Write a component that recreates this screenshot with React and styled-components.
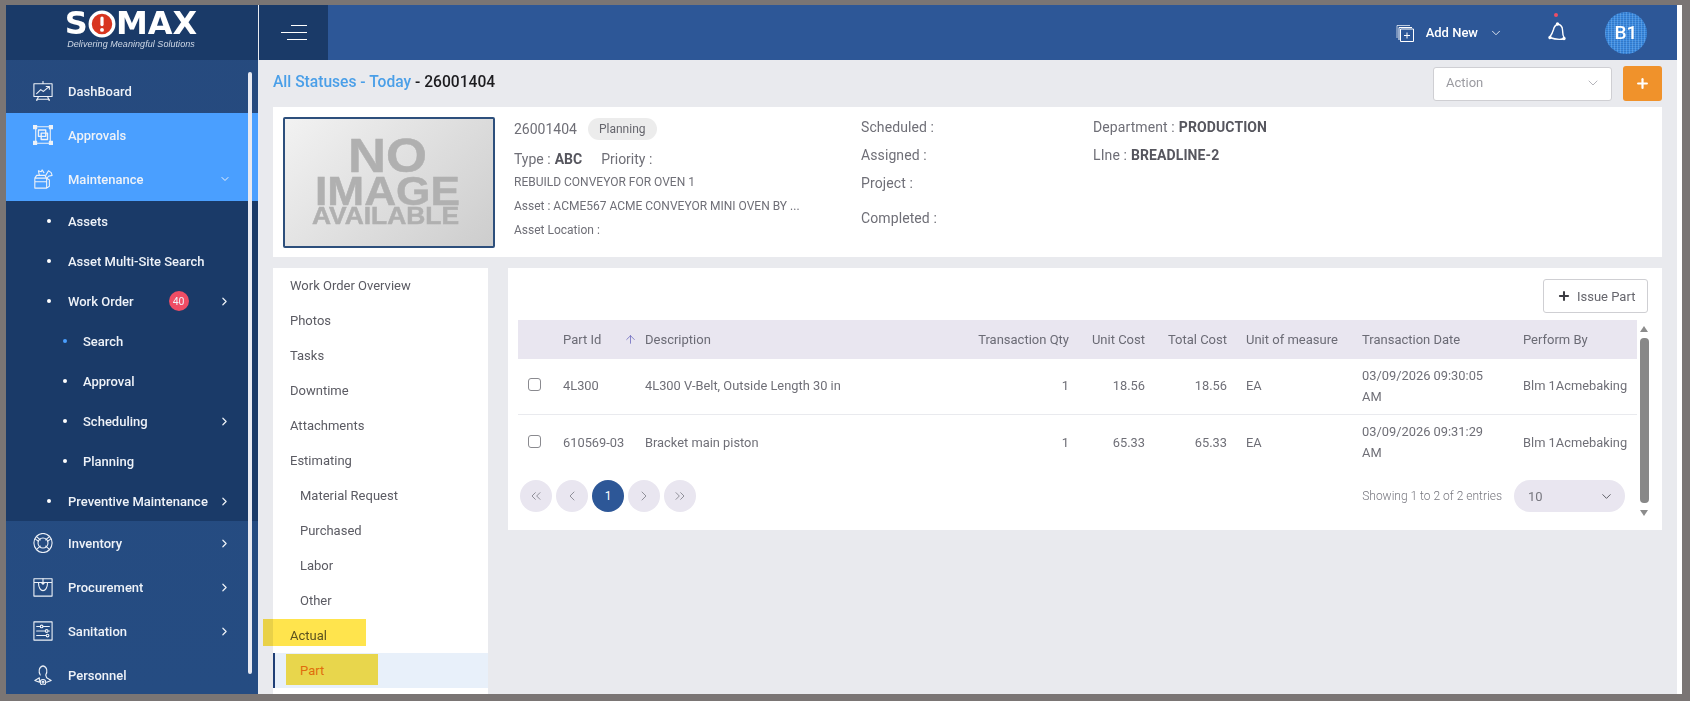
import styled, { createGlobalStyle } from "styled-components";
import { ChevronDown, ChevronRight, ChevronLeft, ChevronsLeft, ChevronsRight, Plus, ArrowUp } from "lucide-react";

const GlobalStyle = createGlobalStyle`
  html, body { margin: 0; padding: 0; background: #7a7574; }
  * { box-sizing: border-box; }
  body { font-family: Roboto, "Liberation Sans", sans-serif; }
`;

const Frame = styled.div`
  width: 1690px;
  height: 701px;
  padding: 5px 8px 7px 6px;
  background: #7a7574;
  overflow: hidden;
`;

const Shell = styled.div`
  display: flex;
  height: 689px;
  padding-right: 5px;
  background: #fff;
`;

const Sidebar = styled.aside`
  position: relative;
  flex: 0 0 253px;
  border-right: 1px solid #e8ebf2;
  background: linear-gradient(180deg, #264a7e 0%, #254c82 100%);
  color: #eef2f8;
  overflow: hidden;
`;

const Brand = styled.div`
  height: 55px;
  background: #1a3a68;
  display: flex;
  flex-direction: column;
  align-items: center;
  padding-top: 5px;
  padding-right: 2px;
`;

const Wordmark = styled.div`
  display: flex;
  align-items: center;
  height: 27px;
  color: #fff;
  font-family: "DejaVu Sans", sans-serif;
  font-weight: 700;
  font-size: 32px;
  line-height: 27px;
`;

const Tagline = styled.div`
  margin-top: 2px;
  font-family: "Liberation Sans", sans-serif;
  font-style: italic;
  font-size: 9px;
  letter-spacing: 0.05px;
  color: #cfd8e6;
`;

const Menu = styled.nav`
  padding-top: 9px;
`;

const MenuItem = styled.div`
  display: flex;
  align-items: center;
  height: 44px;
  padding: 0 27px;
  font-size: 13px;
  font-weight: 500;
  background: ${(p) => (p.$active ? "#4a9fff" : "transparent")};
  svg.icon { flex: 0 0 20px; margin-right: 15px; }
`;

const SubMenu = styled.div`
  background: #1a3a68;
`;

const SubItem = styled.div`
  display: flex;
  align-items: center;
  height: 40px;
  padding: 0 27px 0 ${(p) => (p.$nested ? 57 : 41)}px;
  font-size: 13px;
  font-weight: 500;
`;

const Bullet = styled.span`
  flex: 0 0 4px;
  height: 4px;
  margin-right: ${(p) => (p.$nested ? 16 : 17)}px;
  border-radius: 50%;
  background: ${(p) => (p.$current ? "#4a9fff" : "#fff")};
`;

const Caret = styled.span`
  display: flex;
  margin-left: auto;
`;

const CountBadge = styled.span`
  display: flex;
  align-items: center;
  justify-content: center;
  width: 20px;
  height: 20px;
  margin-left: 35px;
  border-radius: 50%;
  background: #ee4d65;
  font-size: 10.5px;
  font-weight: 400;
`;

const SideScroll = styled.div`
  position: absolute;
  top: 67px;
  left: 242px;
  width: 4px;
  height: 602px;
  border-radius: 2px;
  background: #e8eaf2;
`;

const Main = styled.main`
  flex: 1;
  min-width: 0;
  display: flex;
  flex-direction: column;
  background: #e9eaee;
`;

const TopBar = styled.header`
  display: flex;
  align-items: center;
  flex: 0 0 55px;
  background: #2d5797;
  color: #fff;
`;

const MenuToggle = styled.div`
  display: flex;
  flex-direction: column;
  align-items: flex-end;
  justify-content: center;
  gap: 6px;
  width: 69px;
  height: 100%;
  padding-right: 21px;
  background: #1a3a68;
`;

const ToggleLine = styled.span`
  display: block;
  height: 1px;
  width: ${(p) => p.$w}px;
  background: #fff;
`;

const TopActions = styled.div`
  display: flex;
  align-items: center;
  margin-left: auto;
  padding-right: 30px;
`;

const AddNew = styled.div`
  display: flex;
  align-items: center;
  gap: 11px;
  font-size: 13px;
  font-weight: 500;
`;

const Bell = styled.div`
  position: relative;
  display: flex;
  margin: 0 38px 0 44px;
`;

const BellDot = styled.span`
  position: absolute;
  top: -9px;
  left: 7px;
  width: 4px;
  height: 4px;
  border-radius: 50%;
  background: #ee4d65;
`;

const Avatar = styled.div`
  display: flex;
  align-items: center;
  justify-content: center;
  width: 42px;
  height: 42px;
  border-radius: 50%;
  font-size: 19px;
  font-weight: 500;
  background-color: #3c8be0;
  background-image:
    repeating-linear-gradient(90deg, rgba(160, 210, 255, 0.28) 0 1px, transparent 1px 3px),
    repeating-linear-gradient(0deg, rgba(20, 70, 140, 0.26) 0 1px, transparent 1px 2px);
`;

const Content = styled.div`
  flex: 1;
  min-height: 0;
  display: flex;
  flex-direction: column;
  padding: 0 15px 0 14px;
`;

const TitleRow = styled.div`
  display: flex;
  align-items: center;
  flex: 0 0 47px;
`;

const Crumbs = styled.div`
  font-size: 15.6px;
  font-weight: 500;
  margin-top: -3px;
  color: #1c1c1f;
`;

const CrumbLink = styled.span`
  color: #4a9fe8;
`;

const ActionSelect = styled.div`
  display: flex;
  align-items: center;
  justify-content: space-between;
  width: 179px;
  height: 34px;
  margin-left: auto;
  padding: 0 10px 2px 12px;
  background: #fff;
  border: 1px solid #cfcfd3;
  border-radius: 3px;
  color: #9b9ba1;
  font-size: 13px;
`;

const OrangeButton = styled.div`
  display: flex;
  align-items: center;
  justify-content: center;
  width: 39px;
  height: 35px;
  margin-left: 11px;
  border-radius: 3px;
  background: #f0922b;
  color: #fff;
`;

const SummaryCard = styled.section`
  display: flex;
  flex: 0 0 150px;
  padding: 10px 10px 0;
  background: #fff;
  color: #6f6f77;
`;

const NoImage = styled.svg`
  flex: 0 0 212px;
  height: 131px;
  border: 2px solid #2d4f7c;
  border-radius: 2px;
  background: linear-gradient(135deg, #f2f2f2 0%, #cdcdcd 100%);
  fill: #b0b0b0;
  stroke: #b0b0b0;
  stroke-width: 0.5;
  font-family: "Liberation Sans", sans-serif;
  font-weight: 700;
`;

const InfoColumn = styled.div`
  flex: 0 0 347px;
  margin-left: 19px;
`;

const InfoLine = styled.div`
  display: flex;
  align-items: center;
  height: 24px;
  font-size: 12px;
`;

const HeadLine = styled.div`
  display: flex;
  align-items: center;
  height: ${(p) => p.$h}px;
  padding-top: ${(p) => p.$top || 0}px;
  font-size: 14px;
`;

const StatusPill = styled.span`
  display: flex;
  align-items: center;
  height: 22px;
  margin-left: 11px;
  padding: 0 11px;
  border-radius: 11px;
  background: #ececec;
  font-size: 12px;
  color: #66666d;
`;

const Strong = styled.b`
  margin-left: 4px;
  font-weight: 700;
  color: #56565e;
`;

const Priority = styled.span`
  margin-left: 19px;
`;

const DateColumn = styled.div`
  flex: 0 0 232px;
  font-size: 14px;
  letter-spacing: 0.1px;
`;

const DateLine = styled.div`
  height: ${(p) => p.$h}px;
  display: flex;
  align-items: center;
`;

const PlantColumn = styled.div`
  font-size: 14px;
  letter-spacing: 0.1px;
`;

const Lower = styled.div`
  flex: 1;
  min-height: 0;
  display: flex;
  gap: 20px;
  margin-top: 11px;
`;

const SectionNav = styled.nav`
  flex: 0 0 215px;
  background: #fff;
`;

const NavItem = styled.div`
  position: relative;
  display: flex;
  align-items: center;
  height: 35px;
  padding-left: ${(p) => (p.$active ? 25 : p.$sub ? 27 : 17)}px;
  font-size: 13px;
  color: ${(p) => (p.$active ? "#e07a2a" : "#5b5b63")};
  background: ${(p) => (p.$active ? "#e8f0fa" : "transparent")};
  border-left: ${(p) => (p.$active ? "2px solid #1f3f77" : "none")};
`;

const Marker = styled.span`
  position: absolute;
  left: ${(p) => p.$left}px;
  top: ${(p) => p.$top}px;
  width: ${(p) => p.$w}px;
  height: ${(p) => p.$h}px;
  background: #ffe44d;
  mix-blend-mode: multiply;
`;

const Panel = styled.section`
  position: relative;
  flex: 1;
  align-self: flex-start;
  height: 262px;
  padding: 11px 14px 0 10px;
  background: #fff;
`;

const PanelTools = styled.div`
  display: flex;
  justify-content: flex-end;
  height: 41px;
`;

const IssueButton = styled.div`
  display: flex;
  align-items: center;
  gap: 6px;
  width: 105px;
  height: 34px;
  padding-left: 13px;
  background: #fff;
  border: 1px solid #cfcfd3;
  border-radius: 3px;
  color: #66666d;
  font-size: 13px;
`;

const gridColumns = "37px 82px 311px 132px 76px 82px 116px 161px 122px";

const HeadRow = styled.div`
  display: grid;
  grid-template-columns: ${gridColumns};
  height: 39px;
  width: 1119px;
  background: #e9e6f0;
  color: #6b6b75;
  font-size: 13px;
`;

const BodyRow = styled.div`
  display: grid;
  grid-template-columns: ${gridColumns};
  height: 56px;
  width: 1119px;
  padding-bottom: 2px;
  color: #6f6f77;
  font-size: 12.85px;
  border-bottom: ${(p) => (p.$last ? "none" : "1px solid #e9eaee")};
`;

const Cell = styled.div`
  position: relative;
  display: flex;
  align-items: center;
  justify-content: ${(p) => (p.$right ? "flex-end" : "flex-start")};
  padding: ${(p) => (p.$right ? "0 11px 0 0" : "0 0 0 8px")};
  line-height: 21px;
`;

const DateText = styled.span`
  width: 125px;
`;

const SortArrow = styled.span`
  position: absolute;
  right: 0;
  display: flex;
  color: #5b58b8;
`;

const Check = styled.input.attrs({ type: "checkbox" })`
  appearance: none;
  width: 13px;
  height: 13px;
  margin: -2px 0 0 2px;
  border: 1px solid #8a8a8f;
  border-radius: 3px;
  background: #fff;
`;

const Footer = styled.div`
  display: flex;
  align-items: center;
  height: 32px;
  width: 1119px;
  margin-top: 9px;
  padding-left: 2px;
`;

const Pages = styled.div`
  display: flex;
  gap: 4px;
`;

const PageButton = styled.div`
  display: flex;
  align-items: center;
  justify-content: center;
  width: 32px;
  height: 32px;
  border-radius: 50%;
  background: ${(p) => (p.$active ? "#2d5797" : "#e9e6f0")};
  color: ${(p) => (p.$active ? "#fff" : "#8a8a93")};
  font-size: 12px;
`;

const Entries = styled.div`
  margin-left: auto;
  color: #77777f;
  font-size: 12px;
  font-weight: 300;
`;

const PageSize = styled.div`
  display: flex;
  align-items: center;
  justify-content: space-between;
  width: 111px;
  height: 32px;
  margin: 0 12px 0 12px;
  padding: 0 11px 0 14px;
  border-radius: 16px;
  background: #e9e6f0;
  color: #77777f;
  font-size: 13px;
`;

const Scroller = styled.div`
  position: absolute;
  top: 58px;
  right: 13px;
  width: 10px;
  display: flex;
  flex-direction: column;
  align-items: center;
`;

const ScrollArrow = styled.span`
  width: 0;
  height: 0;
  border-left: 4.5px solid transparent;
  border-right: 4.5px solid transparent;
  ${(p) => (p.$up ? "border-bottom: 6px solid #8c8c8c;" : "border-top: 6px solid #8c8c8c;")}
`;

const ScrollThumb = styled.span`
  width: 9px;
  height: 165px;
  margin: 6px 0 7px;
  border-radius: 4px;
  background: #888;
`;

const lineIcon = {
  className: "icon",
  width: 20,
  height: 20,
  viewBox: "1 1 22 22",
  fill: "none",
  stroke: "currentColor",
  strokeWidth: 1.2,
  strokeLinecap: "round",
  strokeLinejoin: "round",
};

const DashIcon = () => (
  <svg {...lineIcon}>
    <path d="M2 4h20v14H2zM12 1.500V4M7 18l-2 5M17 18l2 5M5 21h14" />
    <path d="M5 15l4.500-4.500 3 2L19 7M15.500 7H19v3" />
  </svg>
);

const ApprovalsIcon = () => (
  <svg {...lineIcon}>
    <path d="M4 3h16v18H4z" />
    <path d="M7 6.500h8v7H7zM10 10h7v7h-7z" strokeWidth="1.500" />
    <path d="M1.500 1.500h3.500V5H1.500zM19 1.500h3.500V5H19zM1.500 19h3.500v3.500H1.500zM19 19h3.500v3.500H19z" fill="currentColor" />
  </svg>
);

const MaintenanceIcon = () => (
  <svg {...lineIcon}>
    <path d="M3 11h13v11H3zM16 11l3 2v7l-3 2M3 11l2-3h9l2 3M3 15h13" />
    <path d="M8 8l-1-5 3 1 1-2 2 3M15 8l3-5 3 2 1 3-4 1-2 3" />
  </svg>
);

const InventoryIcon = () => (
  <svg {...lineIcon}>
    <ellipse cx="12" cy="12" rx="10" ry="10.500" />
    <ellipse cx="12" cy="12" rx="5.500" ry="5.500" />
    <path d="M5 5l4 3.500M19 5l-4 3.500M5 19l4-3.500M19 19l-4-3.500M4 8l3 2M20 8l-3 2" />
  </svg>
);

const ProcurementIcon = () => (
  <svg {...lineIcon}>
    <path d="M2 3h20v19H2zM2 7h20" />
    <path d="M7 7c0 12 10 12 10 0M12 3v6M10 7l2 2 2-2" />
  </svg>
);

const SanitationIcon = () => (
  <svg {...lineIcon}>
    <path d="M2 2h20v20H2z" />
    <path d="M5 7h4M12 7h7M5 12h9M18 12h1M5 17h10" />
    <circle cx="10.500" cy="7" r="1.500" />
    <circle cx="16" cy="12" r="1.500" />
    <circle cx="17" cy="17" r="1.500" />
  </svg>
);

const PersonnelIcon = () => (
  <svg {...lineIcon}>
    <path d="M9 12c-2-3-2-9 3-10 5 1 5 7 3 10l1 3 5 3-5 2M8 20l-5-2 5-3z" />
    <circle cx="12" cy="20" r="3" />
    <circle cx="12" cy="20" r="1" />
  </svg>
);

const AddNewIcon = () => (
  <svg width="20" height="20" viewBox="0 0 20 20" fill="none" stroke="currentColor" strokeWidth="1">
    <path d="M4 17V4.500h13" />
    <path d="M2 15V2.500h13" opacity="0.7" />
    <path d="M5.500 6h13v12.500h-13zM12 9.500v6M9 12.500h6" />
  </svg>
);

const BellIcon = () => (
  <svg width="20" height="22" viewBox="0 0 20 22" fill="none" stroke="currentColor" strokeWidth="1.4" strokeLinejoin="round">
    <path d="M11 2c3 1 4.500 3 4.500 6 0 3 .5 6 2 8.500-4 1.500-9 1-15-1 2-2.500 3-4.500 4-8 .5-2.500 2-4.500 4.500-5.500z" />
    <circle cx="10.500" cy="2" r="1" fill="currentColor" />
    <circle cx="17" cy="16.500" r="1" fill="currentColor" />
    <circle cx="3" cy="15.500" r="1" fill="currentColor" />
  </svg>
);

const LogoDot = () => (
  <svg width="28" height="28" viewBox="0 0 26 26">
    <circle cx="13" cy="13" r="11" fill="#d8351f" stroke="#fff" strokeWidth="3" />
    <rect x="11.500" y="6" width="3" height="9" rx="1.500" fill="#fff" />
    <circle cx="13" cy="18.500" r="1.800" fill="#fff" />
  </svg>
);

const topItems = [
  { label: "DashBoard", Icon: DashIcon },
  { label: "Approvals", Icon: ApprovalsIcon, active: true },
  { label: "Maintenance", Icon: MaintenanceIcon, active: true, open: true },
];

const subItems = [
  { label: "Assets" },
  { label: "Asset Multi-Site Search" },
  { label: "Work Order", badge: 40, more: true },
  { label: "Search", nested: true, current: true },
  { label: "Approval", nested: true },
  { label: "Scheduling", nested: true, more: true },
  { label: "Planning", nested: true },
  { label: "Preventive Maintenance", more: true },
];

const bottomItems = [
  { label: "Inventory", Icon: InventoryIcon, more: true },
  { label: "Procurement", Icon: ProcurementIcon, more: true },
  { label: "Sanitation", Icon: SanitationIcon, more: true },
  { label: "Personnel", Icon: PersonnelIcon },
];

const sections = [
  { label: "Work Order Overview" },
  { label: "Photos" },
  { label: "Tasks" },
  { label: "Downtime" },
  { label: "Attachments" },
  { label: "Estimating" },
  { label: "Material Request", sub: true },
  { label: "Purchased", sub: true },
  { label: "Labor", sub: true },
  { label: "Other", sub: true },
  { label: "Actual", mark: { left: -10, top: 1, w: 103, h: 27 } },
  { label: "Part", sub: true, active: true, mark: { left: 11, top: 1, w: 92, h: 31 } },
];

const parts = [
  { id: "4L300", desc: "4L300 V-Belt, Outside Length 30 in", qty: 1, unit: "18.56", total: "18.56", uom: "EA", date: "03/09/2026 09:30:05 AM", by: "Blm 1Acmebaking" },
  { id: "610569-03", desc: "Bracket main piston", qty: 1, unit: "65.33", total: "65.33", uom: "EA", date: "03/09/2026 09:31:29 AM", by: "Blm 1Acmebaking" },
];

function TopMenuItem({ item }) {
  const { label, Icon, active, open, more } = item;
  return (
    <MenuItem $active={active}>
      <Icon />
      {label}
      {open && (
        <Caret>
          <ChevronDown size={12} />
        </Caret>
      )}
      {more && (
        <Caret>
          <ChevronRight size={13} strokeWidth={2.2} />
        </Caret>
      )}
    </MenuItem>
  );
}

export default function App() {
  return (
    <Frame>
      <GlobalStyle />
      <Shell>
        <Sidebar>
          <Brand>
            <Wordmark>
              S<LogoDot />MAX
            </Wordmark>
            <Tagline>Delivering Meaningful Solutions</Tagline>
          </Brand>
          <Menu>
            {topItems.map((item) => (
              <TopMenuItem key={item.label} item={item} />
            ))}
            <SubMenu>
              {subItems.map((item) => (
                <SubItem key={item.label} $nested={item.nested}>
                  <Bullet $nested={item.nested} $current={item.current} />
                  {item.label}
                  {item.badge && <CountBadge>{item.badge}</CountBadge>}
                  {item.more && (
                    <Caret>
                      <ChevronRight size={13} strokeWidth={2.2} />
                    </Caret>
                  )}
                </SubItem>
              ))}
            </SubMenu>
            {bottomItems.map((item) => (
              <TopMenuItem key={item.label} item={item} />
            ))}
          </Menu>
          <SideScroll />
        </Sidebar>

        <Main>
          <TopBar>
            <MenuToggle>
              <ToggleLine $w={16} />
              <ToggleLine $w={26} />
              <ToggleLine $w={20} />
            </MenuToggle>
            <TopActions>
              <AddNew>
                <AddNewIcon />
                Add New
                <ChevronDown size={14} strokeWidth={1.4} />
              </AddNew>
              <Bell>
                <BellDot />
                <BellIcon />
              </Bell>
              <Avatar>B1</Avatar>
            </TopActions>
          </TopBar>

          <Content>
            <TitleRow>
              <Crumbs>
                <CrumbLink>All Statuses - Today</CrumbLink> - 26001404
              </Crumbs>
              <ActionSelect>
                Action
                <ChevronDown size={16} strokeWidth={1} color="#8f8f98" />
              </ActionSelect>
              <OrangeButton>
                <Plus size={15} strokeWidth={3.5} />
              </OrangeButton>
            </TitleRow>

            <SummaryCard>
              <NoImage viewBox="0 0 208 127">
                <text x="63" y="53" fontSize="48" textLength="79" lengthAdjust="spacingAndGlyphs">NO</text>
                <text x="30" y="86" fontSize="41" textLength="145" lengthAdjust="spacingAndGlyphs">IMAGE</text>
                <text x="27" y="105" fontSize="24" textLength="147" lengthAdjust="spacingAndGlyphs">AVAILABLE</text>
              </NoImage>
              <InfoColumn>
                <HeadLine $h={23}>
                  26001404
                  <StatusPill>Planning</StatusPill>
                </HeadLine>
                <HeadLine $h={30} $top={7}>
                  Type :<Strong>ABC</Strong>
                  <Priority>Priority :</Priority>
                </HeadLine>
                <InfoLine>REBUILD CONVEYOR FOR OVEN 1</InfoLine>
                <InfoLine>Asset : ACME567 ACME CONVEYOR MINI OVEN BY ...</InfoLine>
                <InfoLine>Asset Location :</InfoLine>
              </InfoColumn>
              <DateColumn>
                <DateLine $h={20}>Scheduled :</DateLine>
                <DateLine $h={36}>Assigned :</DateLine>
                <DateLine $h={20}>Project :</DateLine>
                <DateLine $h={50}>Completed :</DateLine>
              </DateColumn>
              <PlantColumn>
                <DateLine $h={20}>
                  Department :<Strong>PRODUCTION</Strong>
                </DateLine>
                <DateLine $h={36}>
                  LIne :<Strong>BREADLINE-2</Strong>
                </DateLine>
              </PlantColumn>
            </SummaryCard>

            <Lower>
              <SectionNav>
                {sections.map(({ label, sub, active, mark }) => (
                  <NavItem key={label} $sub={sub} $active={active}>
                    {label}
                    {mark && <Marker $left={mark.left} $top={mark.top} $w={mark.w} $h={mark.h} />}
                  </NavItem>
                ))}
              </SectionNav>

              <Panel>
                <PanelTools>
                  <IssueButton>
                    <Plus size={14} strokeWidth={3.5} color="#3c3c42" />
                    Issue Part
                  </IssueButton>
                </PanelTools>
                <HeadRow>
                  <Cell />
                  <Cell>
                    Part Id
                    <SortArrow>
                      <ArrowUp size={13} strokeWidth={1.3} />
                    </SortArrow>
                  </Cell>
                  <Cell>Description</Cell>
                  <Cell $right>Transaction Qty</Cell>
                  <Cell $right>Unit Cost</Cell>
                  <Cell $right>Total Cost</Cell>
                  <Cell>Unit of measure</Cell>
                  <Cell>Transaction Date</Cell>
                  <Cell>Perform By</Cell>
                </HeadRow>
                {parts.map((part, i) => (
                  <BodyRow key={part.id} $last={i === parts.length - 1}>
                    <Cell>
                      <Check />
                    </Cell>
                    <Cell>{part.id}</Cell>
                    <Cell>{part.desc}</Cell>
                    <Cell $right>{part.qty}</Cell>
                    <Cell $right>{part.unit}</Cell>
                    <Cell $right>{part.total}</Cell>
                    <Cell>{part.uom}</Cell>
                    <Cell>
                      <DateText>{part.date}</DateText>
                    </Cell>
                    <Cell>{part.by}</Cell>
                  </BodyRow>
                ))}
                <Footer>
                  <Pages>
                    <PageButton><ChevronsLeft size={16} strokeWidth={1.4} /></PageButton>
                    <PageButton><ChevronLeft size={16} strokeWidth={1.4} /></PageButton>
                    <PageButton $active>1</PageButton>
                    <PageButton><ChevronRight size={16} strokeWidth={1.4} /></PageButton>
                    <PageButton><ChevronsRight size={16} strokeWidth={1.4} /></PageButton>
                  </Pages>
                  <Entries>Showing 1 to 2 of 2 entries</Entries>
                  <PageSize>
                    10
                    <ChevronDown size={15} strokeWidth={1.5} color="#55555d" />
                  </PageSize>
                </Footer>
                <Scroller>
                  <ScrollArrow $up />
                  <ScrollThumb />
                  <ScrollArrow />
                </Scroller>
              </Panel>
            </Lower>
          </Content>
        </Main>
      </Shell>
    </Frame>
  );
}
